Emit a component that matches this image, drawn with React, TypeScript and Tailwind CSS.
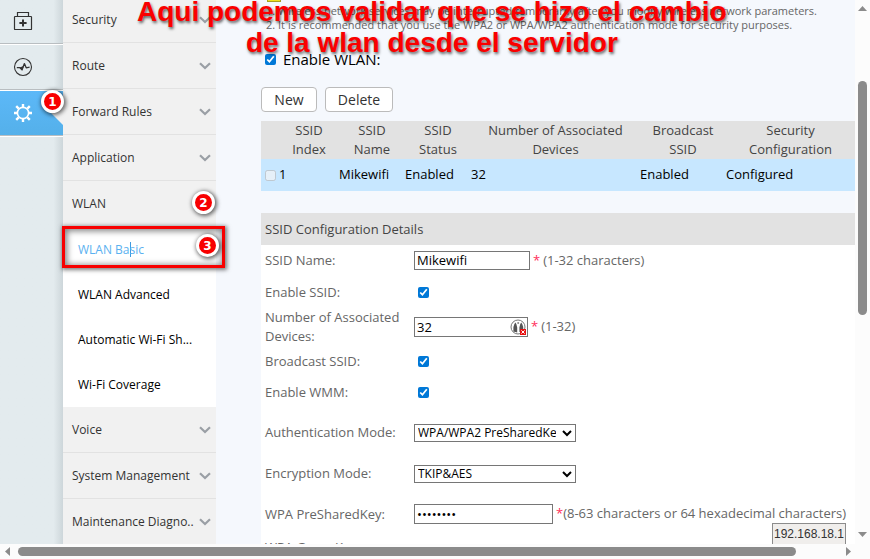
import { ReactNode, useState } from "react"

const topItems = ["Security", "Route", "Forward Rules", "Application"]
const wlanItems = ["WLAN Advanced", "Automatic Wi-Fi Sh...", "Wi-Fi Coverage"]
const bottomItems = ["Voice", "System Management", "Maintenance Diagno.."]

const fieldStyle = "border border-[#767676] bg-white px-[2px] text-[13px] text-black outline-none"
const checkStyle = "size-[11px] accent-[#0078d7]"

function KitIcon() {
    return (
        <svg width="20" height="20" viewBox="0 0 20 20" fill="none" stroke="#333" strokeWidth="1.2">
            <rect x="1.5" y="5.5" width="17" height="13" rx="0.6" />
            <path d="M4.5 5.5v-4h11v4" />
            <path d="M10 8.4v7.2M6.4 12h7.2" strokeWidth="2" />
        </svg>
    )
}

function PulseIcon() {
    return (
        <svg width="20" height="20" viewBox="0 0 20 20" fill="none" stroke="#333">
            <circle cx="10" cy="10" r="8.5" strokeWidth="1.1" />
            <path d="M3.8 10.6h2.8l2.4 2.2 2.4-6.2 1.8 4.2 3.4-.6" strokeWidth="1.3" strokeLinejoin="round" />
            <path d="M6.6 10.6l2.6 2.8 2-4.6z" fill="#333" stroke="none" />
        </svg>
    )
}

function GearIcon() {
    return (
        <svg width="20" height="20" viewBox="0 0 20 20" fill="none" stroke="#fff">
            <circle cx="10" cy="10" r="5.6" strokeWidth="1.6" />
            <path d="M10 1v3M10 16v3M1 10h3M16 10h3M3.2 3.2l2.5 2.5M14.3 14.3l2.5 2.5M3.2 16.8l2.5-2.5M14.3 5.7l2.5-2.5" strokeWidth="2.4" />
        </svg>
    )
}

function Chevron() {
    return (
        <svg width="12" height="8" viewBox="0 0 12 8" fill="none" stroke="#9a9fa5" strokeWidth="2.2" className="shrink-0">
            <path d="M1 1.2l5 4.8 5-4.8" />
        </svg>
    )
}

function RailItem({ label, children, active }: { label: string, children: ReactNode, active?: boolean }) {
    return (
        <a
            href="#"
            aria-label={label}
            className={`relative flex h-[46px] items-center border-t border-t-white border-b border-b-[#b9bec1] pl-[13px] ${active ? "bg-linear-to-b from-[#5cb8f8] to-[#54b0ea]" : ""}`}
        >
            {children}
            {active && (
                <svg width="12" height="24" viewBox="0 0 12 24" className="absolute right-0 top-[10px]">
                    <path d="M12 0v24L0 12z" fill="#f1f1f1" />
                </svg>
            )}
        </a>
    )
}

function MenuItem({ label, chevron = true }: { label: string, chevron?: boolean }) {
    return (
        <a href="#" className={`flex h-[46px] items-center justify-between border-b pl-[9px] pr-[5px] text-[#333] ${chevron ? "border-[#e2e2e2]" : "border-transparent"}`}>
            <span className="whitespace-nowrap">{label}</span>
            {chevron && <Chevron />}
        </a>
    )
}

function Badge({ children, className }: { children: string, className: string }) {
    return (
        <span className={`absolute flex size-[23px] items-center justify-center rounded-full border-[3px] border-white bg-[#f80000] font-['DejaVu_Sans'] text-[12px] font-bold text-white shadow-[1px_1px_4px_1px_rgba(0,0,0,0.6)] ${className}`}>
            {children}
        </span>
    )
}

function Row({ label, htmlFor, height, children }: { label: string, htmlFor: string, height: string, children?: ReactNode }) {
    return (
        <div className={`flex items-center ${height}`}>
            <label htmlFor={htmlFor} className="w-[153px] shrink-0 pl-[4px] leading-[19px]">{label}</label>
            <div className="flex items-center whitespace-nowrap">{children}</div>
        </div>
    )
}

function Picker({ id, options }: { id: string, options: string[] }) {
    return (
        <div className="relative flex">
            <select id={id} className="h-[18px] w-[162px] appearance-none overflow-hidden border border-[#767676] bg-white pl-[3px] pr-[19px] text-[12px] leading-[16px] text-black">
                {options.map((o) => <option key={o}>{o}</option>)}
            </select>
            <svg width="10" height="7" viewBox="0 0 10 7" fill="none" stroke="#000" strokeWidth="2" className="pointer-events-none absolute right-[4px] top-[6px]">
                <path d="M1 1l4 4 4-4" />
            </svg>
        </div>
    )
}

function BlockedIcon() {
    return (
        <svg width="17" height="17" viewBox="0 0 17 17" className="absolute right-[1px] top-[2px]">
            <circle cx="8" cy="8" r="7" fill="#fff" stroke="#777" strokeWidth="1" />
            <path d="M3.4 12.4V8l1-3 1-1.4 1 1.6.8 3.4v5zM9.4 13V8.6l.8-3.4 1-1.6 1 1.4 1 3v4z" fill="#555" />
            <circle cx="8.2" cy="4" r="1" fill="#888" />
            <rect x="10" y="10" width="6" height="6" fill="#e81010" />
            <path d="M11.4 11.4l3.2 3.2M14.6 11.4l-3.2 3.2" stroke="#fff" strokeWidth="1" />
        </svg>
    )
}

export default function App() {
    const [enabled, setEnabled] = useState(true)
    const [ssid, setSsid] = useState("Mikewifi")
    const [devices, setDevices] = useState("32")
    const [key, setKey] = useState("12345678")

    return (
        <div className="relative flex h-screen flex-col overflow-hidden bg-[#fcfcfc] font-['Open_Sans',sans-serif] text-[13px]">
            <div className="flex min-h-0 flex-1">
                <nav aria-label="Sections" className="w-[63px] shrink-0 overflow-hidden bg-linear-to-r from-[#e3ebee] from-85% to-[#cdd6da]">
                    <div className="-mt-[2px] border-b border-white">
                        <RailItem label="Home"><KitIcon /></RailItem>
                        <RailItem label="Status"><PulseIcon /></RailItem>
                        <RailItem label="Advanced" active><GearIcon /></RailItem>
                    </div>
                </nav>

                <nav aria-label="Advanced settings" className="w-[153px] shrink-0 overflow-hidden bg-[#f1f1f1] text-[12px]">
                    <div className="-mt-[3px]">
                        {topItems.map((item) => <MenuItem key={item} label={item} />)}
                        <MenuItem label="WLAN" chevron={false} />
                        <div className="bg-white text-black">
                            <a href="#" className="flex h-[45px] items-center pl-[15px] text-[#5bb1f0]">
                                WLAN Ba<span className="-mr-px h-[15px] w-px bg-[#3f9be0]" />sic
                            </a>
                            {wlanItems.map((item) => (
                                <a key={item} href="#" className="flex h-[45px] items-center whitespace-nowrap pl-[15px]">{item}</a>
                            ))}
                        </div>
                        {bottomItems.map((item) => <MenuItem key={item} label={item} />)}
                    </div>
                </nav>

                <main className="min-w-0 flex-1 overflow-hidden bg-[#f5f8fd] pl-[45px]">
                    <div className="h-[4px] pl-[6px]">
                        <div className="h-[2px] w-[14px] border border-t-0 border-[#a8a020] bg-[#f0e020]" />
                    </div>
                    <div className="whitespace-nowrap pl-[5px] text-[11px] leading-[14px] text-[#666]">
                        <p>1. Wireless network services may be interrupted temporarily after you modify wireless network parameters.</p>
                        <p>2. It is recommended that you use the WPA2 or WPA/WPA2 authentication mode for security purposes.</p>
                    </div>

                    <label className="mt-4 flex items-center gap-[7px] pl-[4px] text-[15px] leading-[22px] text-black">
                        <input type="checkbox" checked={enabled} onChange={(e) => setEnabled(e.target.checked)} className={checkStyle} />
                        Enable WLAN:
                    </label>

                    <div className="mt-[17px] flex gap-2 text-[14px] text-[#333]">
                        <button className="h-[25px] w-[56px] rounded-[4px] border border-[#bbb] bg-white">New</button>
                        <button className="h-[25px] w-[68px] rounded-[4px] border border-[#bbb] bg-white">Delete</button>
                    </div>

                    <table className="mt-[9px] w-full table-fixed">
                        <thead className="bg-[#e2e2e2] leading-[19px] text-[#444]">
                            <tr>
                                <td className="w-[18px]" />
                                <th className="w-[60px] font-normal">SSID<br />Index</th>
                                <th className="w-[66px] font-normal">SSID<br />Name</th>
                                <th className="w-[66px] font-normal">SSID<br />Status</th>
                                <th className="w-[169px] font-normal">Number of Associated<br />Devices</th>
                                <th className="w-[86px] font-normal">Broadcast<br />SSID</th>
                                <th className="font-normal">Security<br />Configuration</th>
                            </tr>
                        </thead>
                        <tbody>
                            <tr className="h-8 bg-[#c7e7ff] text-black">
                                <td className="pl-[4px]">
                                    <input type="checkbox" aria-label="Select SSID 1" disabled className="block size-[11px]" />
                                </td>
                                <td>1</td>
                                <td>Mikewifi</td>
                                <td>Enabled</td>
                                <td>32</td>
                                <td>Enabled</td>
                                <td>Configured</td>
                            </tr>
                        </tbody>
                    </table>

                    <h2 className="mt-[22px] h-8 bg-[#e2e2e2] pl-[4px] leading-8 text-[#444]">SSID Configuration Details</h2>
                    <form className="bg-white text-[#666]">
                        <Row label="SSID Name:" htmlFor="ssid" height="h-[31px]">
                            <input id="ssid" value={ssid} onChange={(e) => setSsid(e.target.value)} className={`h-[19px] w-[116px] ${fieldStyle}`} />
                            <span className="mx-[3px] text-[#ff2d5a]">*</span>(1-32 characters)
                        </Row>
                        <Row label="Enable SSID:" htmlFor="enable-ssid" height="h-8">
                            <input id="enable-ssid" type="checkbox" defaultChecked className={`ml-1 ${checkStyle}`} />
                        </Row>
                        <Row label="Number of Associated Devices:" htmlFor="devices" height="h-[38px]">
                            <div className="relative flex">
                                <input id="devices" value={devices} onChange={(e) => setDevices(e.target.value)} className={`h-[20px] w-[114px] ${fieldStyle}`} />
                                <BlockedIcon />
                            </div>
                            <span className="mx-[3px] text-[#ff2d5a]">*</span>(1-32)
                        </Row>
                        <Row label="Broadcast SSID:" htmlFor="broadcast" height="h-[31px]">
                            <input id="broadcast" type="checkbox" defaultChecked className={`ml-1 ${checkStyle}`} />
                        </Row>
                        <Row label="Enable WMM:" htmlFor="wmm" height="h-[31px]">
                            <input id="wmm" type="checkbox" defaultChecked className={`ml-1 ${checkStyle}`} />
                        </Row>
                        <div className="pt-[4px]">
                            <Row label="Authentication Mode:" htmlFor="auth" height="h-[41px]">
                                <Picker id="auth" options={["WPA/WPA2 PreSharedKey"]} />
                            </Row>
                            <Row label="Encryption Mode:" htmlFor="encryption" height="h-[41px]">
                                <Picker id="encryption" options={["TKIP&AES"]} />
                            </Row>
                            <Row label="WPA PreSharedKey:" htmlFor="key" height="h-[40px]">
                                <input id="key" type="password" value={key} onChange={(e) => setKey(e.target.value)} className={`h-[20px] w-[139px] ${fieldStyle}`} />
                                <span className="ml-[3px] text-[#ff2d5a]">*</span>(8-63 characters or 64 hexadecimal characters)
                            </Row>
                            <Row label="WPA GroupKey Regeneration Interval:" htmlFor="interval" height="h-[46px]">
                                <input id="interval" defaultValue="3600" className={`h-[20px] w-[139px] ${fieldStyle}`} />
                            </Row>
                        </div>
                    </form>
                </main>

                <div className="flex w-[15px] shrink-0 flex-col items-center bg-[#fcfcfc]">
                    <svg width="9" height="5" viewBox="0 0 9 5" fill="#8b8b8b" className="mt-[6px] shrink-0"><path d="M4.5 0L9 5H0z" /></svg>
                    <div className="mt-[70px] h-[43%] w-[9px] rounded-full bg-[#8b8b8b]" />
                    <svg width="9" height="5" viewBox="0 0 9 5" fill="#8b8b8b" className="mb-[7px] mt-auto shrink-0"><path d="M0 0h9L4.5 5z" /></svg>
                </div>
            </div>

            <div className="relative flex h-[15px] shrink-0 items-center bg-[#fcfcfc] pl-[5px] pr-[19px]">
                <svg width="5" height="9" viewBox="0 0 5 9" fill="#8b8b8b"><path d="M5 0v9L0 4.5z" /></svg>
                <div className="ml-2 mr-[50px] h-[9px] flex-1 rounded-full bg-[#8b8b8b]" />
                <svg width="5" height="9" viewBox="0 0 5 9" fill="#8b8b8b"><path d="M0 0v9l5-4.5z" /></svg>
            </div>

            {/* status bubble */}
            <div className="absolute bottom-[15px] right-[24px] h-[21px] w-[74px] border border-b-0 border-[#8c8c8c] bg-[#f0eeec] text-center font-['Liberation_Sans'] text-[12px] leading-[21px] text-[#333]">
                192.168.18.1
            </div>

            {/* annotations drawn over the page */}
            <div className="pointer-events-none absolute left-[62px] top-[226px] h-[42px] w-[163px] border-[3px] border-[#f80000] shadow-[1px_1px_4px_1px_rgba(0,0,0,0.5),inset_1px_1px_6px_1px_rgba(0,0,0,0.5)]" />
            <Badge className="left-[41px] top-[90px]">1</Badge>
            <Badge className="left-[192px] top-[191px]">2</Badge>
            <Badge className="left-[196px] top-[234px]">3</Badge>
            <p className="pointer-events-none absolute left-[137px] top-[-4px] whitespace-nowrap text-center font-['Liberation_Sans'] text-[28px] font-bold leading-[31px] text-[#fa0000] [text-shadow:1px_2px_3px_rgba(0,0,0,0.6)]">
                Aqui podemos validar que se hizo el cambio<br />de la wlan desde el servidor
            </p>
        </div>
    )
}
